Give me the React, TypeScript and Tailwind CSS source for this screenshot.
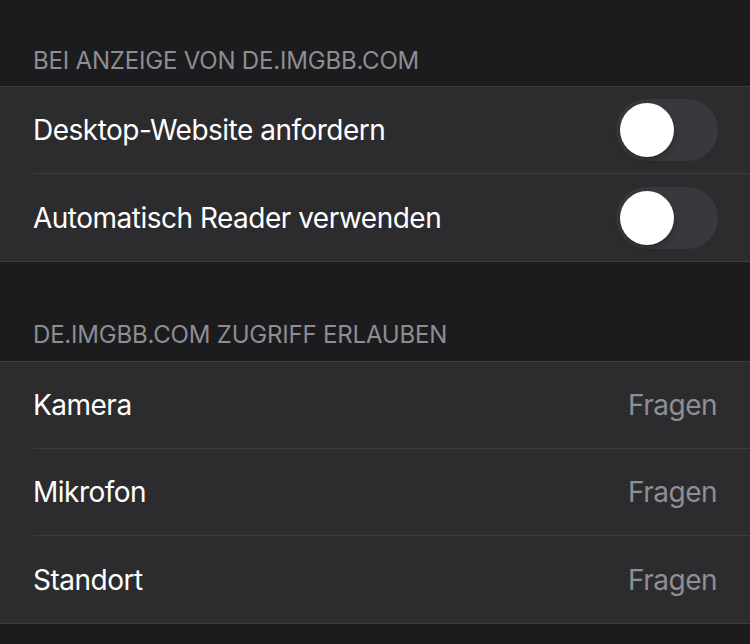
const displayRows = [
  { id: "desktop", label: "Desktop-Website anfordern" },
  { id: "reader", label: "Automatisch Reader verwenden" },
];

const accessRows = [
  { id: "camera", label: "Kamera", value: "Fragen" },
  { id: "mic", label: "Mikrofon", value: "Fragen" },
  { id: "location", label: "Standort", value: "Fragen" },
];

function Toggle() {
  return (
    <div className="flex h-[62px] w-[102px] items-center rounded-full bg-[#39393d] px-[4px]">
      <div className="h-[54px] w-[54px] rounded-full bg-white shadow-[0_3px_6px_rgba(0,0,0,0.25)]" />
    </div>
  );
}

function SectionHeader({ children }: { children: string }) {
  return (
    <p className="px-[33px] text-[24px] leading-none tracking-[-0.008em] text-[#8d8d92]">
      {children}
    </p>
  );
}

export default function App() {
  return (
    <div
      className="min-h-[644px] w-[750px] overflow-hidden bg-[#1c1c1e] text-white"
      style={{ fontFamily: "Inter, 'Noto Sans', sans-serif" }}
    >
      <div className="flex h-[86px] items-end pb-[13px]">
        <SectionHeader>BEI ANZEIGE VON DE.IMGBB.COM</SectionHeader>
      </div>
      <div className="border-y border-[#3d3d41] bg-[#2c2c2e]">
        {displayRows.map((row, i) => (
          <div key={row.id} className="pl-[33px]">
            <div
              className={`flex h-[87px] items-center justify-between pr-[32px] ${
                i < displayRows.length - 1 ? "border-b border-[#3d3d41]" : ""
              }`}
            >
              <span className="text-[28px] tracking-[-0.018em]">{row.label}</span>
              <Toggle />
            </div>
          </div>
        ))}
      </div>

      <div className="flex h-[99px] items-end pb-[14px]">
        <SectionHeader>DE.IMGBB.COM ZUGRIFF ERLAUBEN</SectionHeader>
      </div>
      <div className="border-y border-[#3d3d41] bg-[#2c2c2e]">
        {accessRows.map((row, i) => (
          <div key={row.id} className="pl-[33px]">
            <div
              className={`flex h-[87px] items-center justify-between pr-[33px] ${
                i < accessRows.length - 1 ? "border-b border-[#3d3d41]" : ""
              }`}
            >
              <span className="text-[28px] tracking-[-0.018em]">{row.label}</span>
              <span className="text-[28px] tracking-[-0.018em] text-[#8e8e93]">{row.value}</span>
            </div>
          </div>
        ))}
      </div>
    </div>
  );
}
